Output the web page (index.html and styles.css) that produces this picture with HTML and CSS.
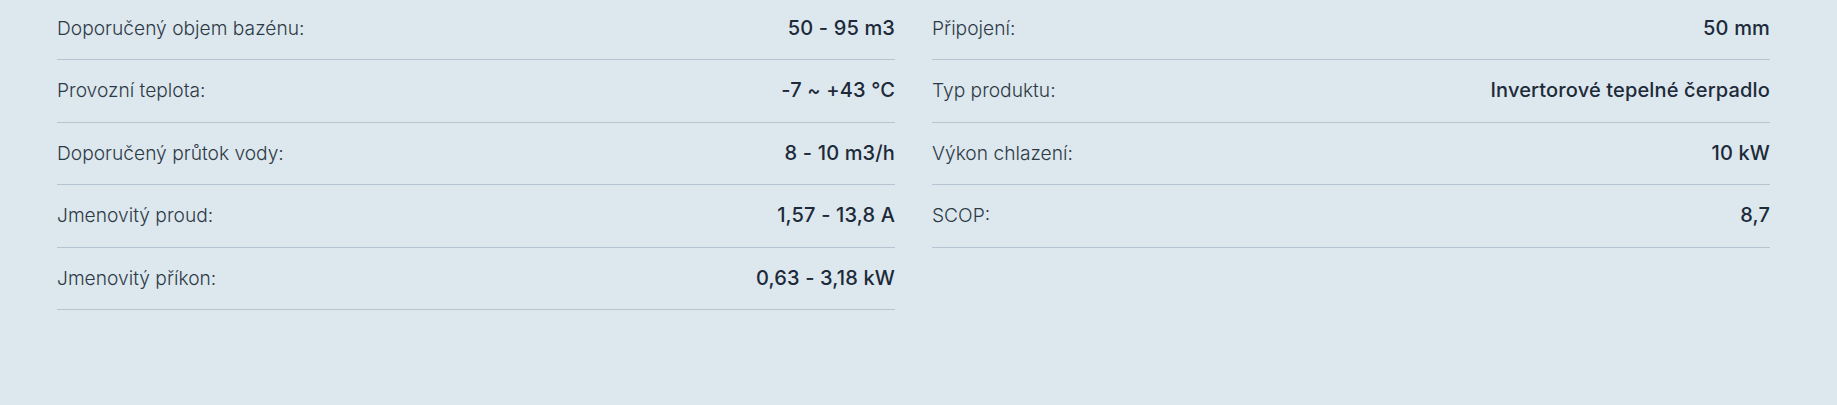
FILE: index.html
```html
<!DOCTYPE html>
<html lang="cs">
<head>
<meta charset="utf-8">
<link rel="stylesheet" href="styles.css">
</head>
<body>
<div class="specs">
  <div class="col">
    <div class="row"><span class="label">Doporučený objem bazénu:</span><span class="value">50 - 95 m3</span></div>
    <div class="row"><span class="label">Provozní teplota:</span><span class="value">-7 ~ +43 °C</span></div>
    <div class="row"><span class="label">Doporučený průtok vody:</span><span class="value">8 - 10 m3/h</span></div>
    <div class="row"><span class="label">Jmenovitý proud:</span><span class="value">1,57 - 13,8 A</span></div>
    <div class="row"><span class="label">Jmenovitý příkon:</span><span class="value">0,63 - 3,18 kW</span></div>
  </div>
  <div class="col">
    <div class="row"><span class="label">Připojení:</span><span class="value">50 mm</span></div>
    <div class="row"><span class="label">Typ produktu:</span><span class="value">Invertorové tepelné čerpadlo</span></div>
    <div class="row"><span class="label">Výkon chlazení:</span><span class="value">10 kW</span></div>
    <div class="row"><span class="label">SCOP:</span><span class="value">8,7</span></div>
  </div>
</div>
</body>
</html>
```
FILE: styles.css
```css
html, body {
  margin: 0;
  padding: 0;
  background: #dde7ee;
  height: 100%;
}
body {
  font-family: Inter, "Noto Sans", sans-serif;
}
.specs {
  display: grid;
  grid-template-columns: 1fr 1fr;
  column-gap: 37px;
  padding: 0 67px 0 57px;
  margin-top: -2.5px;
  align-items: start;
}
.col {
  display: flex;
  flex-direction: column;
}
.row {
  display: flex;
  justify-content: space-between;
  align-items: center;
  padding: 19px 0;
  line-height: 23.5px;
  border-bottom: 1px solid #b5c5d1;
}
.label {
  font-size: 19.2px;
  font-weight: 300;
  color: #2d3a46;
}
.value {
  font-size: 20px;
  font-weight: 500;
  letter-spacing: 0.15px;
  color: #1c2a39;
}
```
